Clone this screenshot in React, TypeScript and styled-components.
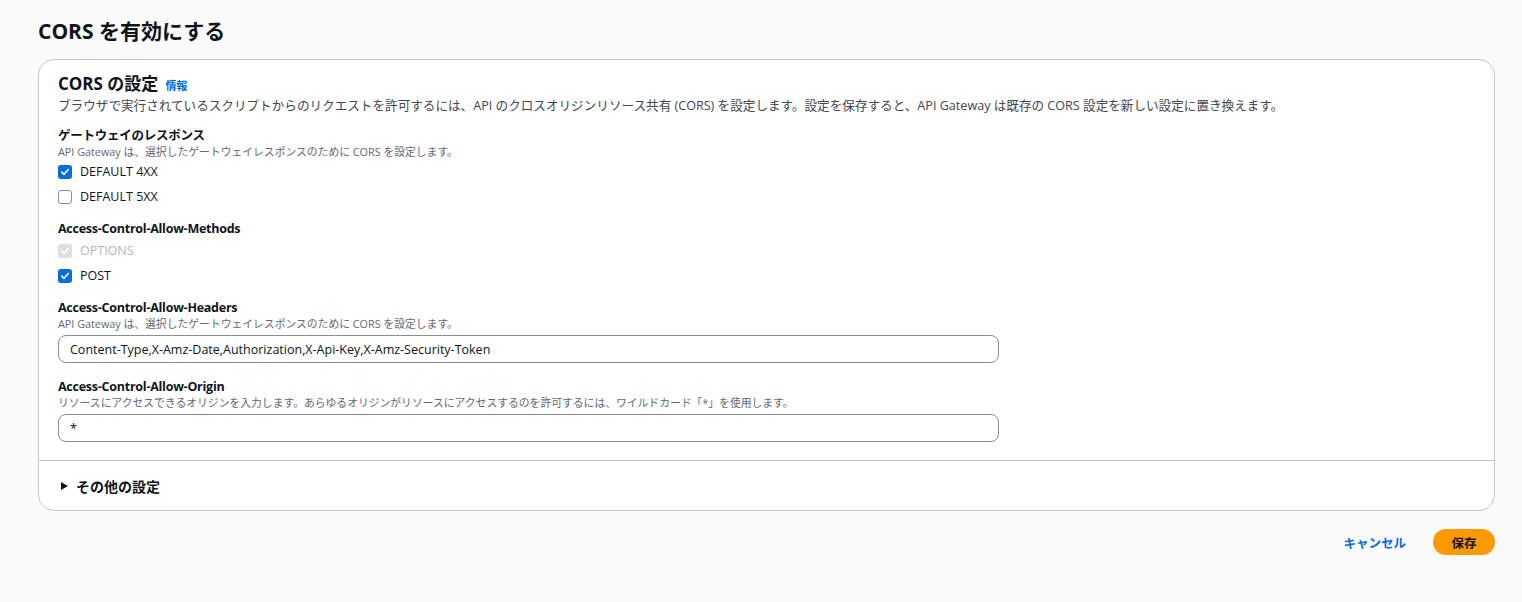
import styled, { createGlobalStyle } from "styled-components";

const GlobalStyle = createGlobalStyle`
    body {
        margin: 0;
        background: #fafafa;
        font-family: "Open Sans", "Noto Sans CJK JP", sans-serif;
        color: #0f141a;
    }
`;

const Check = ({ checked, disabled }: { checked: boolean; disabled?: boolean }) => (
    <Box $checked={checked} $disabled={disabled}>
        {checked && (
            <svg width="10" height="10" viewBox="0 0 10 10">
                <path d="M1.8 5.2 L4 7.3 L8.3 2.6" fill="none" stroke="white" strokeWidth="1.7" strokeLinecap="round" strokeLinejoin="round" />
            </svg>
        )}
    </Box>
);

export default function App() {
    return (
        <>
            <GlobalStyle />
            <Page>
                <PageTitle>CORS を有効にする</PageTitle>
                <Card>
                    <CardBody>
                        <CardHeader>
                            <h2>CORS の設定</h2>
                            <InfoLink>情報</InfoLink>
                        </CardHeader>
                        <Description>
                            ブラウザで実行されているスクリプトからのリクエストを許可するには、API のクロスオリジンリソース共有 (CORS) を設定します。設定を保存すると、API Gateway は既存の CORS 設定を新しい設定に置き換えます。
                        </Description>

                        <Field $space={13}>
                            <Label>ゲートウェイのレスポンス</Label>
                            <Hint>API Gateway は、選択したゲートウェイレスポンスのために CORS を設定します。</Hint>
                            <CheckList $space={2}>
                                <CheckRow><Check checked /><span>DEFAULT 4XX</span></CheckRow>
                                <CheckRow><Check checked={false} /><span>DEFAULT 5XX</span></CheckRow>
                            </CheckList>
                        </Field>

                        <Field $space={15}>
                            <Label>Access-Control-Allow-Methods</Label>
                            <CheckList $space={4}>
                                <CheckRow $disabled><Check checked disabled /><span>OPTIONS</span></CheckRow>
                                <CheckRow><Check checked /><span>POST</span></CheckRow>
                            </CheckList>
                        </Field>

                        <Field $space={15}>
                            <Label>Access-Control-Allow-Headers</Label>
                            <Hint>API Gateway は、選択したゲートウェイレスポンスのために CORS を設定します。</Hint>
                            <Input defaultValue="Content-Type,X-Amz-Date,Authorization,X-Api-Key,X-Amz-Security-Token" />
                        </Field>

                        <Field $space={16}>
                            <Label>Access-Control-Allow-Origin</Label>
                            <Hint>リソースにアクセスできるオリジンを入力します。あらゆるオリジンがリソースにアクセスするのを許可するには、ワイルドカード「*」を使用します。</Hint>
                            <Input defaultValue="*" />
                        </Field>
                    </CardBody>
                    <Expander>
                        <svg width="10" height="10" viewBox="0 0 10 10">
                            <path d="M2 1 L9 5 L2 9 Z" fill="#0f141a" />
                        </svg>
                        <span>その他の設定</span>
                    </Expander>
                </Card>
                <Actions>
                    <LinkButton>キャンセル</LinkButton>
                    <PrimaryButton>保存</PrimaryButton>
                </Actions>
            </Page>
        </>
    );
}

const Page = styled.div`
    padding: 18px 27px 30px 38px;
`;

const PageTitle = styled.h1`
    margin: 0 0 15px 0;
    font-size: 21px;
    line-height: 26px;
    font-weight: 700;
`;

const Card = styled.div`
    background: #ffffff;
    border: 1px solid #c6c6cd;
    border-radius: 16px;
`;

const CardBody = styled.div`
    display: flex;
    flex-direction: column;
    padding: 13px 19px 18px 19px;
    border-bottom: 1px solid #c6c6cd;
`;

const CardHeader = styled.div`
    display: flex;
    align-items: baseline;
    gap: 7px;
    > h2 {
        margin: 0;
        font-size: 17px;
        line-height: 22px;
        font-weight: 700;
    }
`;

const InfoLink = styled.span`
    font-size: 11px;
    font-weight: 700;
    color: #006ce0;
`;

const Description = styled.p`
    margin: 2px 0 0 0;
    font-size: 12.6px;
    line-height: 18px;
    color: #424650;
`;

const Field = styled.div<{ $space: number }>`
    display: flex;
    flex-direction: column;
    margin-top: ${({ $space }) => $space}px;
`;

const Label = styled.div`
    font-size: 12.5px;
    line-height: 16px;
    font-weight: 700;
    letter-spacing: -0.25px;
`;

const Hint = styled.div`
    font-size: 10.8px;
    line-height: 16px;
    color: #656871;
`;

const CheckList = styled.div<{ $space: number }>`
    display: flex;
    flex-direction: column;
    gap: 6px;
    margin-top: ${({ $space }) => $space}px;
`;

const CheckRow = styled.label<{ $disabled?: boolean }>`
    display: flex;
    align-items: center;
    gap: 8px;
    height: 19px;
    font-size: 12.5px;
    color: ${({ $disabled }) => ($disabled ? "#b4b4bb" : "#0f141a")};
`;

const Box = styled.span<{ $checked: boolean; $disabled?: boolean }>`
    display: inline-flex;
    align-items: center;
    justify-content: center;
    box-sizing: border-box;
    width: 14px;
    height: 14px;
    border-radius: 3px;
    background: ${({ $checked, $disabled }) =>
        $disabled ? "#dedee3" : $checked ? "#006ce0" : "#ffffff"};
    border: ${({ $checked, $disabled }) =>
        $checked || $disabled ? "none" : "1px solid #8c8c94"};
`;

const Input = styled.input`
    box-sizing: border-box;
    width: 941px;
    height: 28px;
    margin-top: 3px;
    padding: 0 11px;
    border: 1px solid #8c8c94;
    border-radius: 8px;
    font-family: "Open Sans", "Noto Sans CJK JP", sans-serif;
    font-size: 12.5px;
    color: #0f141a;
    outline: none;
`;

const Expander = styled.div`
    display: flex;
    align-items: center;
    gap: 7px;
    height: 49px;
    padding-left: 20px;
    > span {
        font-size: 14px;
        font-weight: 700;
    }
`;

const Actions = styled.div`
    display: flex;
    justify-content: flex-end;
    align-items: center;
    gap: 27px;
    margin-top: 18px;
`;

const LinkButton = styled.button`
    border: none;
    background: none;
    padding: 0;
    font-family: "Open Sans", "Noto Sans CJK JP", sans-serif;
    font-size: 12.5px;
    font-weight: 700;
    color: #006ce0;
    cursor: pointer;
`;

const PrimaryButton = styled.button`
    width: 62px;
    height: 26px;
    border: none;
    border-radius: 20px;
    background: #ff9900;
    font-family: "Open Sans", "Noto Sans CJK JP", sans-serif;
    font-size: 12.5px;
    font-weight: 700;
    color: #0f141a;
    cursor: pointer;
`;
